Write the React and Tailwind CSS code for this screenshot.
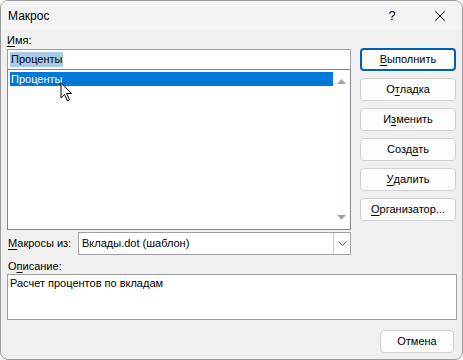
import React from "react";

const U = ({ children }) => <span className="underline underline-offset-2">{children}</span>;

function Btn({ children, primary }) {
  return (
    <div
      className={
        "h-[23px] w-[96px] flex items-center justify-center rounded-[4px] bg-[#fdfdfd] text-black whitespace-nowrap " +
        (primary ? "border-2 border-[#005fb8]" : "border border-[#d0d0d0]")
      }
    >
      {children}
    </div>
  );
}

export default function App() {
  return (
    <div className="w-[463px] h-[360px] bg-white" style={{ fontFamily: '"Liberation Sans", Arial, sans-serif' }}>
      <div className="w-[463px] h-[360px] border border-[#9a9a9a] rounded-[8px] bg-[#f0f0f0] overflow-hidden flex flex-col relative text-[11px]">
        {/* Title bar */}
        <div className="h-[29px] flex items-center pl-[7px] text-[12px] text-black bg-[#f3f3f3]">
          <span className="flex-1 pt-[1px]">Макрос</span>
          <span className="w-[20px] text-center text-[13px] mr-[32px]">?</span>
          <svg width="12" height="12" viewBox="0 0 12 12" className="mr-[16px]">
            <path d="M1 1 L11 11 M11 1 L1 11" stroke="#000" strokeWidth="1" />
          </svg>
        </div>
        {/* Body */}
        <div className="flex-1 flex flex-col px-[6px] text-black">
          <div className="flex gap-[9px]">
            <div className="w-[344px] flex flex-col">
              <div className="h-[19px] pt-[3px] leading-[15px]"><U>И</U>мя:</div>
              <div className="h-[20px] bg-white border border-[#a0a0a0] border-b-0 flex items-center pl-[2px]">
                <span className="bg-[#a8cbe8] leading-[15px] px-[1px]">Проценты</span>
              </div>
              <div className="h-[161px] bg-white border border-[#828790] flex p-[2px] pr-0 relative">
                <div className="flex-1">
                  <div className="h-[14px] bg-[#0078d7] text-white leading-[14px] pl-[1px]">Проценты</div>
                </div>
                <div className="w-[17px] flex flex-col items-center justify-between py-[7px]">
                  <svg width="9" height="5" viewBox="0 0 9 5"><path d="M0 5 L4.5 0 L9 5 Z" fill="#a3a3a3" /></svg>
                  <svg width="9" height="5" viewBox="0 0 9 5"><path d="M0 0 L4.5 5 L9 0 Z" fill="#a3a3a3" /></svg>
                </div>
                <svg className="absolute left-[52px] top-[12px]" width="14" height="20" viewBox="0 0 14 20">
                  <path d="M1 1 L1 16 L4.5 12.5 L7.5 19 L9.5 18 L6.5 11.5 L11.5 11.5 Z" fill="#fff" stroke="#000" strokeWidth="1" strokeLinejoin="round" />
                </svg>
              </div>
              <div className="flex items-center mt-[2px] h-[23px]">
                <div className="w-[71px] pl-[1px] whitespace-nowrap"><U>М</U>акросы из:</div>
                <div className="flex-1 h-[23px] bg-white border border-[#a0a0a0] flex items-center pl-[3px]">
                  <span className="flex-1 whitespace-nowrap">Вклады.dot (шаблон)</span>
                  <div className="w-[17px] h-[21px] border-l border-[#c8c8c8] flex items-center justify-center">
                    <svg width="9" height="5" viewBox="0 0 9 5"><path d="M0.5 0.5 L4.5 4.5 L8.5 0.5" fill="none" stroke="#555" strokeWidth="1" /></svg>
                  </div>
                </div>
              </div>
            </div>
            <div className="flex flex-col gap-[7px] pt-[18px]">
              <Btn primary><U>В</U>ыполнить</Btn>
              <Btn>О<U>т</U>ладка</Btn>
              <Btn>И<U>з</U>менить</Btn>
              <Btn>Созд<U>а</U>ть</Btn>
              <Btn><U>У</U>далить</Btn>
              <Btn><U>О</U>рганизатор...</Btn>
            </div>
          </div>
          <div className="h-[19px] pt-[4px] leading-[15px] pl-[1px] whitespace-nowrap">О<U>п</U>исание:</div>
          <div className="h-[46px] w-[450px] bg-white border border-[#a0a0a0] pl-[2px] pt-[1px] leading-[15px]">
            Расчет процентов по вкладам
          </div>
          <div className="flex justify-end mt-[10px] pr-[2px]">
            <div className="h-[23px] w-[74px] flex items-center justify-center rounded-[4px] bg-[#fdfdfd] border border-[#d0d0d0]">Отмена</div>
          </div>
        </div>
      </div>
    </div>
  );
}
